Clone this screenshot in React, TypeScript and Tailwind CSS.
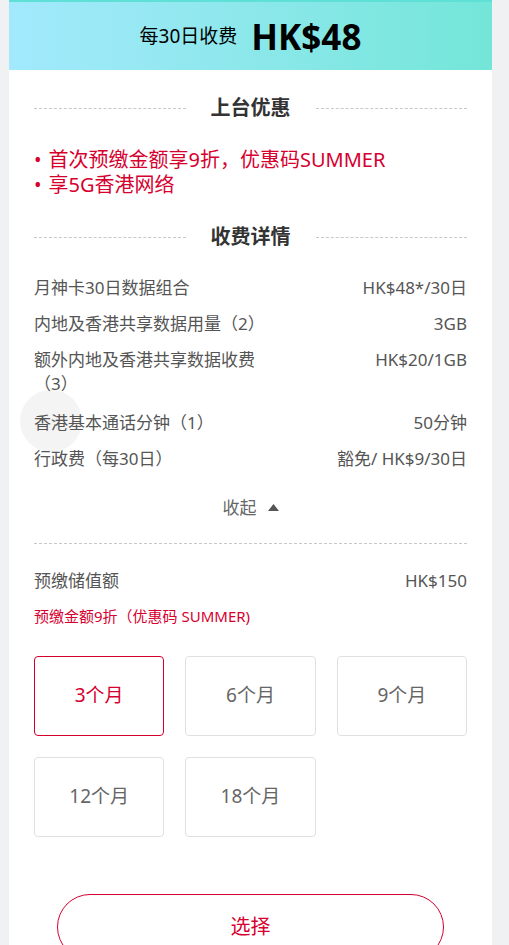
const font = { fontFamily: '"Noto Sans", "Noto Sans CJK SC", sans-serif' };

const rows: { label: string; value: string }[] = [
  { label: "月神卡30日数据组合", value: "HK$48*/30日" },
  { label: "内地及香港共享数据用量（2）", value: "3GB" },
  { label: "额外内地及香港共享数据收费（3）", value: "HK$20/1GB" },
  { label: "香港基本通话分钟（1）", value: "50分钟" },
  { label: "行政费（每30日）", value: "豁免/ HK$9/30日" },
];

const periods = ["3个月", "6个月", "9个月", "12个月", "18个月"];

function SectionTitle({ title }: { title: string }) {
  return (
    <div className="flex items-center h-[26px]">
      <div className="flex-1 border-t border-dashed border-[#c8c8c8]" />
      <h2 className="w-[130px] text-center text-[20px] font-bold text-[#333] leading-[26px]">{title}</h2>
      <div className="flex-1 border-t border-dashed border-[#c8c8c8]" />
    </div>
  );
}

export default function App() {
  const selected = 0;
  return (
    <div className="min-h-[945px] bg-[#f0f1f3] pl-[9px] pr-[17px] overflow-hidden" style={font}>
      <div className="bg-white min-h-[945px] relative">
        {/* faint floating circle, behind the text */}
        <div className="absolute left-[11px] top-[390px] w-[62px] h-[62px] rounded-full bg-[#f4f4f4] pointer-events-none" />

        <div className="relative">
          <div className="h-[70px] border-t-2 border-[#5fe0d6] bg-gradient-to-r from-[#a2e9fd] to-[#73e6d8] flex items-center justify-center gap-[14px]">
            <span className="text-[19px] text-black">每30日收费</span>
            <span className="text-[35px] font-bold text-black leading-none">HK$48</span>
          </div>

          <div className="px-[25px] pt-[25px]">
            <SectionTitle title="上台优惠" />
            <ul className="mt-[26px] text-[20px] leading-[25px] text-[#d6002f]">
              <li className="flex gap-[7px]">
                <span>•</span>
                <span>首次预缴金额享9折，优惠码SUMMER</span>
              </li>
              <li className="flex gap-[7px]">
                <span>•</span>
                <span>享5G香港网络</span>
              </li>
            </ul>

            <div className="mt-[27px]">
              <SectionTitle title="收费详情" />
            </div>

            <div className="mt-[26px] flex flex-col gap-[12px] text-[17px] leading-[24px] text-[#555]">
              {rows.map((r) => (
                <div key={r.label} className="flex justify-between gap-4 [&:nth-child(3)]:pb-[3px]">
                  <span className="max-w-[240px]">{r.label}</span>
                  <span className="text-right whitespace-nowrap">{r.value}</span>
                </div>
              ))}
            </div>

            <button className="mx-auto mt-[24px] flex items-center gap-[11px] text-[17px] text-[#666]">
              收起
              <svg width="11" height="7" viewBox="0 0 11 7">
                <path d="M5.5 0 L11 7 L0 7 Z" fill="#555" />
              </svg>
            </button>

            <div className="mt-[22px] border-t border-dashed border-[#c8c8c8]" />

            <div className="mt-[25px] flex justify-between text-[17px] leading-[24px] text-[#555]">
              <span>预缴储值额</span>
              <span>HK$150</span>
            </div>
            <p className="mt-[13px] text-[15px] text-[#d6002f] leading-[20px]">预缴金额9折（优惠码 SUMMER)</p>

            <div className="mt-[30px] grid grid-cols-3 gap-[21px]">
              {periods.map((p, i) => (
                <div
                  key={p}
                  className={
                    i === selected
                      ? "h-[80px] rounded-[4px] border border-[#d6002f] flex items-center justify-center text-[19px] text-[#d6002f]"
                      : "h-[80px] rounded-[4px] border border-[#e0e0e0] flex items-center justify-center text-[19px] text-[#666]"
                  }
                >
                  {p}
                </div>
              ))}
            </div>

            <div className="mt-[57px] px-[23px]">
              <button className="w-full h-[66px] rounded-full border border-[#d6002f] text-[20px] text-[#d6002f]">
                选择
              </button>
            </div>
          </div>
        </div>
      </div>
    </div>
  );
}
